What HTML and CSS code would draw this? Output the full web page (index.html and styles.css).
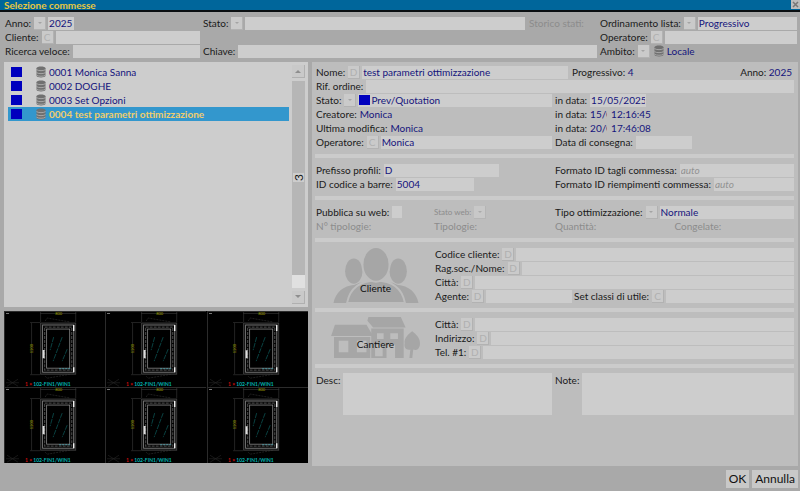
FILE: index.html
```
<!DOCTYPE html>
<html lang="it">
<head>
  <meta charset="utf-8">
  <meta name="viewport" content="width=device-width, initial-scale=1.0">
  <title>Selezione commesse</title>
  <link rel="stylesheet" href="styles.css">
</head>
<body>
  <!-- Shared drawings -->
  <svg class="defs" aria-hidden="true">
    <symbol id="db" viewBox="0 0 10 12">
      <path d="M0.5 2.2C0.5 0 9.5 0 9.5 2.2V9.8C9.5 12 0.5 12 0.5 9.8Z" fill="#707070"/>
      <path d="M0.5 3.6C2 5 8 5 9.5 3.6M0.5 6.6C2 8 8 8 9.5 6.6M0.5 9.2C2 10.6 8 10.6 9.5 9.2" fill="none" stroke="#b4b4b4" stroke-width="0.8"/>
    </symbol>
    <symbol id="window" viewBox="0 0 101 76">
      <path d="M0 0.5H101M0.5 0V76" stroke="#2c2c2c" fill="none"/>
      <path d="M2 2.5H5" stroke="#777"/>
      <path d="M3 68L14 75M14 68L3 75M2 71.5H15" stroke="#262626" stroke-width="0.6"/>
      <path d="M36 2.5H72M36.5 1V11M71.5 1V11M27.5 12V63M26 11.5H36M26 63.5H36" stroke="#3a3a3a" stroke-width="0.6" fill="none"/>
      <path d="M41 10L43 7L66 11M41 65L43 67L66 63" stroke="#333" stroke-width="0.6" stroke-dasharray="2 1" fill="none"/>
      <rect x="36.5" y="12" width="35" height="51" fill="#161616" stroke="#444" stroke-width="0.8"/>
      <rect x="38.5" y="14" width="31" height="47" fill="#000" stroke="#888" stroke-width="0.8"/>
      <rect x="40.5" y="16" width="27" height="43" fill="none" stroke="#444" stroke-width="1.2" stroke-dasharray="3 1"/>
      <rect x="42.5" y="18" width="23" height="39" fill="#000" stroke="#888" stroke-width="0.8"/>
      <path d="M49.500 26L46 39M58 26L49 50M63 38L58 50" stroke="#0b5050" stroke-width="0.8" stroke-dasharray="5 1"/>
      <path d="M55 57.500H66" stroke="#4c8890" stroke-width="1.2" stroke-dasharray="2 1"/>
      <path d="M39.500 39V47" stroke="#ddd" stroke-width="2"/>
      <path d="M69.500 14V20M69.500 56V61" stroke="#eee" stroke-width="1.4"/>
      <text class="dim" x="51" y="4">800</text>
      <text class="dim" transform="translate(29 42) rotate(-90)">1200</text>
      <text class="code" x="21" y="75"><tspan fill="#d00c0c">1 ×</tspan> <tspan fill="#00b4b4">102-FIN1/WIN1</tspan></text>
    </symbol>
  </svg>

  <header class="titlebar">
    <h1>Selezione commesse</h1>
    <button class="close" aria-label="Chiudi"><svg viewBox="0 0 9 9"><path d="M2 2L7 7M7 2L2 7" stroke="#777" stroke-width="1.5"/></svg></button>
  </header>

  <!-- Search filters -->
  <form class="filters">
    <div class="field"><label for="anno">Anno:</label><i class="box arrow"></i><select id="anno"><option>2025</option></select></div>
    <div class="field"><label for="stato">Stato:</label><i class="box arrow"></i><select id="stato" class="grow"><option></option></select><span class="history off">Storico stati:</span></div>
    <div class="field"><label for="ordine">Ordinamento lista:</label><i class="box arrow"></i><select id="ordine" class="grow"><option>Progressivo</option></select></div>

    <div class="field"><label for="cliente">Cliente:</label><button type="button" class="box">C</button><input id="cliente" type="text" class="grow"></div>
    <div></div>
    <div class="field"><label for="oper">Operatore:</label><button type="button" class="box">C</button><input id="oper" type="text" class="grow"></div>

    <div class="field"><label for="ricerca">Ricerca veloce:</label><input id="ricerca" type="text" class="grow"></div>
    <div class="field"><label for="chiave">Chiave:</label><input id="chiave" type="text" class="grow"></div>
    <div class="field"><label for="ambito">Ambito:</label><i class="box arrow"></i><svg class="db"><use href="#db"/></svg><select id="ambito" class="plain"><option>Locale</option></select></div>
  </form>

  <main>
    <section class="left">
      <div class="list-panel">
        <ul class="list">
          <li><i class="swatch"></i><svg class="db"><use href="#db"/></svg>0001 Monica Sanna</li>
          <li><i class="swatch"></i><svg class="db"><use href="#db"/></svg>0002 DOGHE</li>
          <li><i class="swatch"></i><svg class="db"><use href="#db"/></svg>0003 Set Opzioni</li>
          <li class="selected"><i class="swatch"></i><svg class="db"><use href="#db"/></svg>0004 test parametri ottimizzazione</li>
        </ul>
        <div class="scrollbar">
          <button class="scroll up" aria-label="Su"></button>
          <div class="track"><span class="count">3</span><span class="thumb"></span></div>
          <button class="scroll down" aria-label="Giù"></button>
        </div>
      </div>
      <div class="previews">
        <svg viewBox="0 0 101 76"><use href="#window"/></svg>
        <svg viewBox="0 0 101 76"><use href="#window"/></svg>
        <svg viewBox="0 0 101 76"><use href="#window"/></svg>
        <svg viewBox="0 0 101 76"><use href="#window"/></svg>
        <svg viewBox="0 0 101 76"><use href="#window"/></svg>
        <svg viewBox="0 0 101 76"><use href="#window"/></svg>
      </div>
    </section>

    <form class="detail">
      <div class="group">
        <div class="field">
          <label for="nome">Nome:</label><button type="button" class="box">D</button><input id="nome" type="text" class="grow" value="test parametri ottimizzazione">
          <div class="numbers"><span>Progressivo: <b>4</b></span><span>Anno: <b>2025</b></span></div>
        </div>
        <div class="field"><label for="rif">Rif. ordine:</label><input id="rif" type="text" class="grow"></div>
        <div class="two">
          <div class="field"><label for="stato2">Stato:</label><i class="box arrow"></i><span class="state grow"><i class="swatch"></i><select id="stato2" class="grow"><option>Prev/Quotation</option></select></span></div>
          <div class="field"><label for="data">in data:</label><input id="data" type="text" class="date" value="15/05/2025"></div>
          <div class="field"><span>Creatore:</span><b>Monica</b></div>
          <div class="field"><span>in data:</span><b class="cut">15/0</b><b>12:16:45</b></div>
          <div class="field"><span>Ultima modifica:</span><b>Monica</b></div>
          <div class="field"><span>in data:</span><b class="cut">20/0</b><b>17:46:08</b></div>
          <div class="field"><label for="oper2">Operatore:</label><button type="button" class="box">C</button><input id="oper2" type="text" class="grow" value="Monica"></div>
          <div class="field"><label for="consegna">Data di consegna:</label><input id="consegna" type="text" class="date"></div>
        </div>
      </div>

      <div class="group two">
        <div class="field"><label for="prefisso">Prefisso profili:</label><input id="prefisso" type="text" class="medium" value="D"></div>
        <div class="field"><label for="tagli">Formato ID tagli commessa:</label><input id="tagli" type="text" class="grow" placeholder="auto"></div>
        <div class="field"><label for="barre">ID codice a barre:</label><input id="barre" type="text" class="small" value="5004"></div>
        <div class="field"><label for="riemp">Formato ID riempimenti commessa:</label><input id="riemp" type="text" class="grow" placeholder="auto"></div>
      </div>

      <div class="group two">
        <div class="halves">
          <div class="field"><label for="web">Pubblica su web:</label><input id="web" type="checkbox"></div>
          <div class="field off"><label for="statoweb" class="narrow">Stato web:</label><select id="statoweb" class="box arrow-only" disabled><option></option></select></div>
        </div>
        <div class="field"><label for="tipo">Tipo ottimizzazione:</label><i class="box arrow"></i><select id="tipo" class="grow"><option>Normale</option></select></div>
        <div class="halves off"><span>N° tipologie:</span><span>Tipologie:</span></div>
        <div class="halves off"><span>Quantità:</span><span>Congelate:</span></div>
      </div>

      <div class="group person">
        <button type="button" class="picture">
          <svg viewBox="0 0 88 58" width="88" height="56">
            <g fill="#a6a6a6">
              <ellipse cx="21" cy="25" rx="9" ry="13"/><ellipse cx="67" cy="25" rx="9" ry="13"/>
              <path d="M0 58C2 47 10 40 22 39L27 37L61 37L66 39C78 40 86 47 88 58Z"/>
            </g>
            <path d="M14 58C17 43 27 35 44 35S71 43 74 58Z" fill="#a6a6a6" stroke="#bdbdbd" stroke-width="2"/>
            <ellipse cx="44" cy="18" rx="14" ry="18" fill="#a6a6a6" stroke="#bdbdbd" stroke-width="2"/>
          </svg>
          <span class="caption">Cliente</span>
        </button>
        <div>
          <div class="field"><label for="codice">Codice cliente:</label><button type="button" class="box">D</button><input id="codice" type="text" class="grow"></div>
          <div class="field"><label for="rag">Rag.soc./Nome:</label><button type="button" class="box">D</button><input id="rag" type="text" class="grow"></div>
          <div class="field"><label for="citta">Città:</label><button type="button" class="box">D</button><input id="citta" type="text" class="grow"></div>
          <div class="field"><label for="agente">Agente:</label><button type="button" class="box">D</button><input id="agente" type="text" class="agent"><label for="utile">Set classi di utile:</label><button type="button" class="box">C</button><input id="utile" type="text" class="grow"></div>
        </div>
      </div>

      <div class="group person">
        <button type="button" class="picture">
          <svg viewBox="0 0 94 44" width="94" height="42">
            <g fill="#a6a6a6">
              <path d="M4 8H37L44 20H0Z"/>
              <path fill-rule="evenodd" d="M3 21H41V43H3ZM8 25V37H18V25ZM27 25V37H37V25Z"/>
              <path d="M39 0H73L78 11H44L38 4Z"/>
              <path fill-rule="evenodd" d="M42 12H76V43H67V29H58V43H42ZM48 17V23H55V17ZM62 17V23H70V17ZM46 29V41H54V29Z"/>
              <path d="M85 15C89 18 94 23 93 29C92 35 88 35 86 34L85 43H82L83 34C79 35 76 32 77 28C76 22 82 17 85 15Z"/>
            </g>
          </svg>
          <span class="caption">Cantiere</span>
        </button>
        <div>
          <div class="field"><label for="citta2">Città:</label><button type="button" class="box">D</button><input id="citta2" type="text" class="grow"></div>
          <div class="field"><label for="indirizzo">Indirizzo:</label><button type="button" class="box">D</button><input id="indirizzo" type="text" class="grow"></div>
          <div class="field"><label for="tel">Tel. #1:</label><button type="button" class="box">D</button><input id="tel" type="text" class="grow"></div>
        </div>
      </div>

      <div class="group two">
        <div class="field notes"><label for="desc">Desc:</label><textarea id="desc" class="grow"></textarea></div>
        <div class="field notes"><label for="note">Note:</label><textarea id="note" class="grow"></textarea></div>
      </div>
    </form>
  </main>

  <footer>
    <button>OK</button>
    <button>Annulla</button>
  </footer>
</body>
</html>
```

FILE: styles.css
```
* {
  box-sizing: border-box;
}

body {
  margin: 0;
  min-height: 100vh;
  display: flex;
  flex-direction: column;
  background: #a9a9a9;
  color: #1a1a1a;
  font-family: Lato, sans-serif;
  font-size: 10px;
  line-height: 14px;
}

button, input, select, textarea {
  font: inherit;
  color: #14147c;
  margin: 0;
  padding: 0;
  border: none;
  border-radius: 0;
  appearance: none;
  outline: none;
}

.defs {
  position: absolute;
  width: 0;
  height: 0;
}

/* Title bar */
.titlebar {
  display: flex;
  justify-content: space-between;
  height: 12px;
  background: #00669b;
  border-bottom: 2px solid #0a0f12;
}

h1 {
  margin: 0;
  padding-left: 4px;
  font-size: 10px;
  line-height: 10px;
  color: #e8c840;
}

.close {
  width: 9px;
  height: 9px;
  background: #bdbdbd;
}

.close svg {
  display: block;
}

/* Fields */
.field {
  display: flex;
  align-items: center;
  gap: 2px;
  height: 14px;
  white-space: nowrap;
}

.field > label, .field > span:first-child {
  margin-right: 1px;
}

.field input, .field select {
  height: 13px;
  min-width: 0;
  padding: 0 1px;
  background: #cdcdcd;
  line-height: 13px;
}

.field .grow {
  flex: 1;
}

.field b, .numbers b {
  font-weight: normal;
  color: #14147c;
}

.box {
  flex: none;
  width: 12px;
  height: 13px;
  background: #cacaca;
  border-right: 1px solid #b2b2b2;
  border-bottom: 1px solid #b2b2b2;
  color: #b0b0b0;
  text-align: center;
  line-height: 12px;
}

.arrow {
  display: flex;
  align-items: center;
  justify-content: center;
}

.arrow::after, .scroll::after {
  content: "";
  border: 2px solid transparent;
  border-top: 2px solid #a4a4a4;
  border-bottom: none;
}

.field .arrow-only {
  width: 12px;
  background: #cdcdcd url("data:image/svg+xml,%3Csvg xmlns='http://www.w3.org/2000/svg' width='4' height='2'%3E%3Cpath d='M0 0H4L2 2Z' fill='%23a4a4a4'/%3E%3C/svg%3E") center no-repeat;
}

.field .plain {
  background: none;
}

.off {
  color: #8c8c8c;
}

.narrow {
  font-size: 8px;
}

.swatch {
  flex: none;
  width: 11px;
  height: 10px;
  background: #0000be;
}

.db {
  flex: none;
  width: 10px;
  height: 12px;
}

.filters {
  display: grid;
  grid-template-columns: minmax(0, 195fr) minmax(0, 394fr) minmax(0, 197fr);
  column-gap: 3px;
  padding: 4px 3px 4px 5px;
}

.filters .db {
  margin-left: 2px;
}

.history {
  width: 70px;
  padding-left: 2px;
}

/* Job list and previews */
main {
  flex: 1;
  display: grid;
  grid-template-columns: minmax(0, 304fr) minmax(0, 486fr);
  gap: 4px;
  padding: 0 2px 0 4px;
}

.left {
  display: flex;
  flex-direction: column;
  gap: 4px;
  padding-bottom: 3px;
}

.list-panel {
  flex: 1;
  display: flex;
  gap: 3px;
  padding: 3px;
  background: #cdcdcd;
}

.list {
  flex: 1;
  margin: 0;
  padding: 0 0 0 1px;
  list-style: none;
  color: #14147c;
}

.list li {
  display: flex;
  align-items: center;
  height: 14px;
  padding-left: 3px;
}

.list .db {
  margin: 0 3px 0 14px;
}

.list .selected {
  background: #3397cd;
  color: #f0cd6c;
  font-weight: bold;
}

.scrollbar {
  width: 13px;
  display: flex;
  flex-direction: column;
  gap: 3px;
}

.scroll {
  display: flex;
  align-items: center;
  justify-content: center;
  height: 13px;
  background: #c9c9c9;
  border-right: 1px solid #b0b0b0;
  border-bottom: 1px solid #b0b0b0;
}

.scroll::after {
  border-width: 3px;
  border-top-color: #8e8e8e;
}

.up::after {
  transform: rotate(180deg);
}

.track {
  flex: 1;
  display: flex;
  flex-direction: column;
  justify-content: space-between;
  align-items: center;
  background: #b6b6b6;
}

.count {
  margin: auto 0;
  padding: 1px 0;
  background: #cdcdcd;
  font-size: 12px;
  line-height: 11px;
  writing-mode: vertical-rl;
  transform: rotate(180deg);
}

.thumb {
  width: 13px;
  height: 13px;
  background: #e0e0e0;
}

.previews {
  display: grid;
  grid-template-columns: repeat(3, 1fr);
  background: #000;
}

.previews svg {
  display: block;
  width: 100%;
}

.code {
  font-size: 5px;
  font-weight: bold;
}

.dim {
  font-size: 4px;
  fill: #a0a000;
}

/* Job details */
.detail {
  padding: 3px 4px 0 3px;
  background: #bdbdbd;
}

.group {
  padding: 0 0 5px 1px;
  margin-bottom: 5px;
  border-bottom: 4px solid #cbcbcb;
}

.group:last-child {
  border: none;
}

.two {
  display: grid;
  grid-template-columns: minmax(0, 236fr) minmax(0, 239fr);
  column-gap: 3px;
}

.halves {
  display: grid;
  grid-template-columns: 1fr 1fr;
}

.numbers {
  width: 224px;
  display: flex;
  justify-content: space-between;
  padding: 0 2px;
}

.state {
  display: flex;
  align-items: center;
  padding-left: 1px;
  background: #cdcdcd;
}

.field .date {
  width: 56px;
}

.cut {
  width: 17px;
  margin-right: 2px;
  overflow: hidden;
}

.field .medium {
  width: 115px;
}

.field .small {
  width: 78px;
}

.field .agent {
  width: 86px;
}

::placeholder {
  color: #929292;
  font-style: italic;
}

.field input[type="checkbox"] {
  width: 10px;
  height: 12px;
}

.person {
  display: grid;
  grid-template-columns: minmax(0, 119fr) minmax(0, 359fr);
}

.picture {
  position: relative;
  display: flex;
  align-items: center;
  justify-content: center;
  height: 100%;
  background: none;
  color: #111;
}

/* Captions lie over the drawings */
.caption {
  position: absolute;
  left: 0;
  right: 0;
  bottom: 8px;
}

.group .notes {
  height: auto;
  align-items: flex-start;
}

.notes textarea {
  height: 42px;
  background: #cdcdcd;
  resize: none;
}

footer {
  display: flex;
  justify-content: flex-end;
  gap: 3px;
  padding: 4px 2px 3px;
}

footer button {
  height: 18px;
  padding: 0 3px;
  background: #c8c8c8;
  color: #111;
  font-size: 12px;
  line-height: 18px;
}
```
